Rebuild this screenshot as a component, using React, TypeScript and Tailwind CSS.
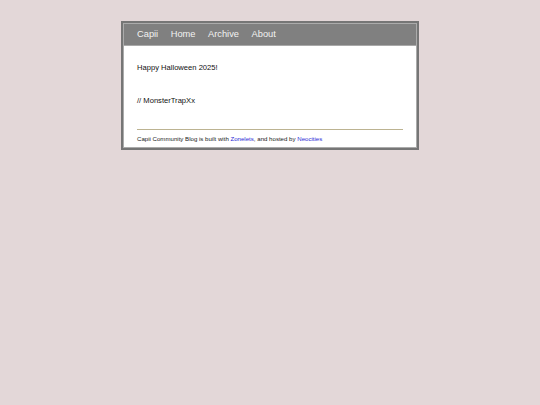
export default function App() {
  const font = { fontFamily: '"Liberation Sans", Arial, sans-serif' };
  return (
    <div className="min-h-[405px] bg-[#e3d7d8] pt-[21px]" style={font}>
      <div className="mx-auto w-[298px] border-2 border-[#767676]">
        <div className="border border-[#ababab] bg-white">
          <nav className="flex h-[22px] items-center gap-[12.5px] border-b border-[#a9a9a9] bg-[#808080] pl-[13px] text-[9.3px] leading-none text-[#f2f2f2]">
            <a>Capii</a>
            <a>Home</a>
            <a>Archive</a>
            <a>About</a>
          </nav>
          <main className="px-[13px] pt-[17px] pb-[4px] text-[7.6px] leading-[10px] text-[#111]">
            <p>Happy Halloween 2025!</p>
            <p className="mt-[23px]">// MonsterTrapXx</p>
            <footer className="mt-[23px] border-t border-[#bcb391] pt-[5px] text-[6.1px] leading-[8px] text-[#222]">
              Capii Community Blog is built with{" "}
              <a className="text-[#2a2ad6]">Zonelets</a>, and hosted by{" "}
              <a className="text-[#2a2ad6]">Neocities</a>
            </footer>
          </main>
        </div>
      </div>
    </div>
  );
}
